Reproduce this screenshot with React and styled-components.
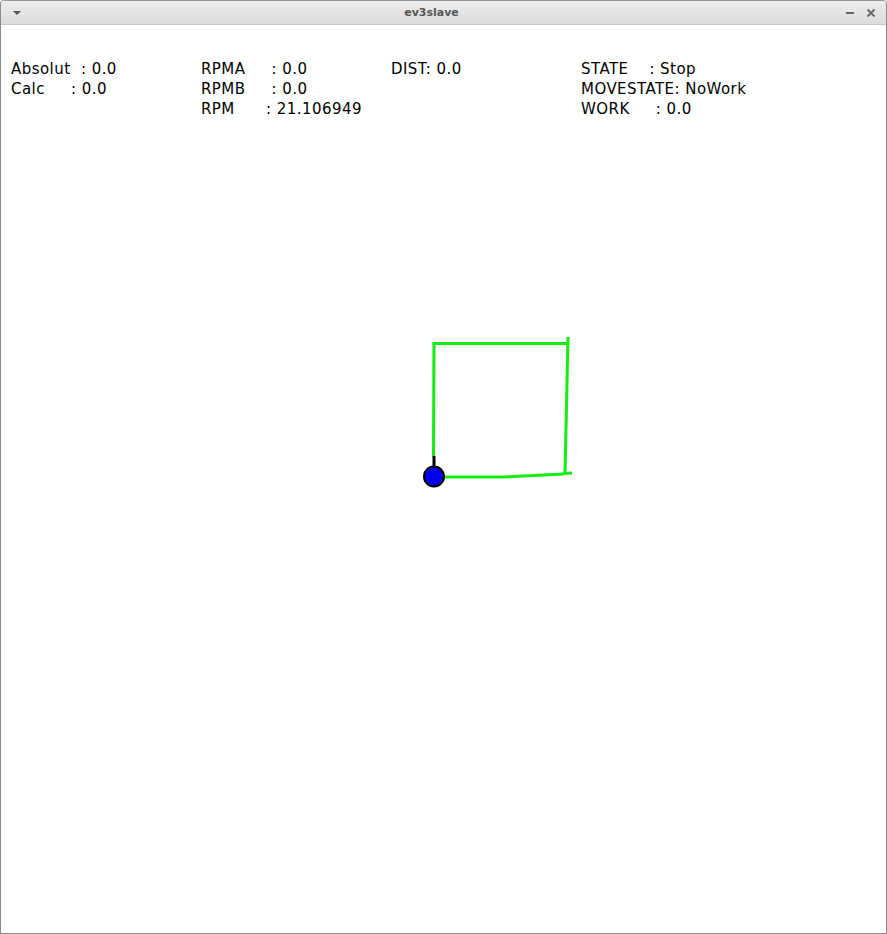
import React from "react";
import styled, { createGlobalStyle } from "styled-components";

const Global = createGlobalStyle`
  html, body { margin: 0; padding: 0; background: #fff; }
  body { font-family: "DejaVu Sans", sans-serif; }
`;

const Window = styled.div`
  width: 887px;
  height: 934px;
  box-sizing: border-box;
  border: 1px solid #8a8a8a;
  border-top-color: #9a9a9a;
  border-radius: 4px 4px 0 0;
  display: flex;
  flex-direction: column;
  background: #fff;
  overflow: hidden;
`;

const TitleBar = styled.div`
  height: 23px;
  flex: none;
  display: flex;
  align-items: center;
  position: relative;
  background: linear-gradient(#ededed, #dcdcdc);
  border-bottom: 1px solid #c8c8c8;
  padding: 0 8px 0 9px;
`;

const Title = styled.div`
  position: absolute;
  left: 0;
  right: 0;
  text-align: center;
  font-family: "DejaVu Sans", sans-serif;
  font-weight: bold;
  font-size: 11px;
  color: #555;
  pointer-events: none;
  padding-right: 24px;
`;

const Spacer = styled.div`flex: 1;`;

const IconBtn = styled.div`
  width: 14px;
  height: 14px;
  display: flex;
  align-items: center;
  justify-content: center;
  margin-left: ${p => p.$gap || 0}px;
`;

const Canvas = styled.div`
  position: relative;
  flex: 1;
`;

const Info = styled.div`
  display: grid;
  grid-template-columns: repeat(4, 190px);
  padding: 34px 0 0 10px;
  font-family: "DejaVu Sans", sans-serif;
  font-size: 15px;
  letter-spacing: 0.45px;
  line-height: 20px;
  color: #000;
`;

const Column = styled.div`
  display: flex;
  flex-direction: column;
`;

const Line = styled.div`
  white-space: pre;
`;

const Drawing = styled.svg`
  position: absolute;
  left: -1px;
  top: -24px;
  width: 887px;
  height: 934px;
  pointer-events: none;
`;

const columns = [
  ["Absolut  : 0.0", "Calc     : 0.0"],
  ["RPMA     : 0.0", "RPMB     : 0.0", "RPM      : 21.106949"],
  ["DIST: 0.0"],
  ["STATE    : Stop", "MOVESTATE: NoWork", "WORK     : 0.0"],
];

export default function App() {
  return (
    <>
      <Global />
      <Window>
        <TitleBar>
          <IconBtn>
            <svg width="10" height="6" viewBox="0 0 10 6">
              <path d="M1 1 L9 1 L5 5 Z" fill="#555" />
            </svg>
          </IconBtn>
          <Title>ev3slave</Title>
          <Spacer />
          <IconBtn>
            <svg width="10" height="10" viewBox="0 0 10 10">
              <rect x="1" y="4" width="8" height="2" fill="#666" />
            </svg>
          </IconBtn>
          <IconBtn $gap={7}>
            <svg width="10" height="10" viewBox="0 0 10 10">
              <path d="M1.5 1.5 L8.5 8.5 M8.5 1.5 L1.5 8.5" stroke="#666" strokeWidth="1.8" />
            </svg>
          </IconBtn>
        </TitleBar>
        <Canvas>
          <Info>
            {columns.map((col, i) => (
              <Column key={i}>
                {col.map((t, j) => (
                  <Line key={j}>{t}</Line>
                ))}
              </Column>
            ))}
          </Info>
          <Drawing viewBox="0 0 887 934">
            <g stroke="#11ee11" strokeWidth="3" fill="none" strokeLinecap="butt">
              <polyline points="434,476 505,476 564,473" />
              <line x1="563" y1="472.5" x2="572" y2="472" />
              <line x1="568" y1="336" x2="565" y2="473" />
              <line x1="568" y1="342.5" x2="432.5" y2="342.5" />
              <line x1="434" y1="342" x2="433.5" y2="456" />
            </g>
            <line x1="434" y1="455" x2="434" y2="468" stroke="#000" strokeWidth="3" />
            <circle cx="434" cy="475.5" r="10" fill="#0000ee" stroke="#000" strokeWidth="2" />
          </Drawing>
        </Canvas>
      </Window>
    </>
  );
}
